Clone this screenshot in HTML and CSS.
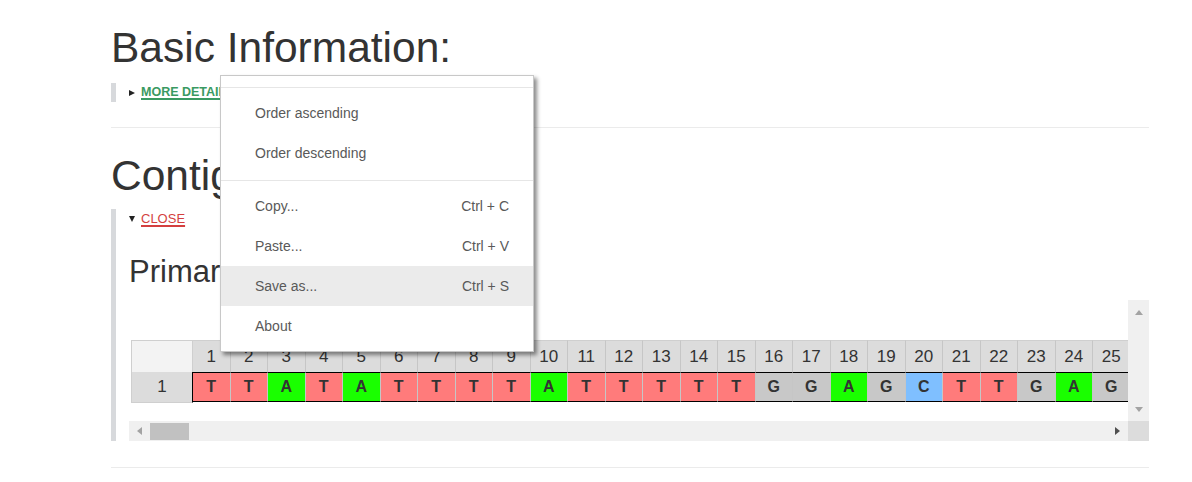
FILE: index.html
```html
<!DOCTYPE html>
<html lang="en">
<head>
<meta charset="utf-8">
<title>Contig viewer</title>
<link rel="stylesheet" href="styles.css">
</head>
<body>
<div class="page">
  <h1 class="title">Basic Information:</h1>
  <div class="panel panel--first">
    <div class="toggle"><span class="caret caret--right"></span><a class="link link--more" href="#">MORE DETAILS</a></div>
  </div>
  <div class="rule"></div>

  <h1 class="title">Contig Information:</h1>
  <div class="panel panel--open">
    <div class="toggle"><span class="caret caret--down"></span><a class="link link--close" href="#">CLOSE</a></div>
    <h2 class="subtitle">Primary Sequence</h2>
    <div class="scroller">
      <div class="viewport">
        <div class="seq-table">
          <div class="seq-row seq-row--head">
            <div class="cell corner"></div>
            <div class="cell num">1</div><div class="cell num">2</div><div class="cell num">3</div><div class="cell num">4</div><div class="cell num">5</div>
            <div class="cell num">6</div><div class="cell num">7</div><div class="cell num">8</div><div class="cell num">9</div><div class="cell num">10</div>
            <div class="cell num">11</div><div class="cell num">12</div><div class="cell num">13</div><div class="cell num">14</div><div class="cell num">15</div>
            <div class="cell num">16</div><div class="cell num">17</div><div class="cell num">18</div><div class="cell num">19</div><div class="cell num">20</div>
            <div class="cell num">21</div><div class="cell num">22</div><div class="cell num">23</div><div class="cell num">24</div><div class="cell num">25</div>
          </div>
          <div class="seq-row seq-row--data">
            <div class="cell rowhead">1</div>
            <div class="cell base base--t">T</div><div class="cell base base--t">T</div><div class="cell base base--a">A</div><div class="cell base base--t">T</div><div class="cell base base--a">A</div>
            <div class="cell base base--t">T</div><div class="cell base base--t">T</div><div class="cell base base--t">T</div><div class="cell base base--t">T</div><div class="cell base base--a">A</div>
            <div class="cell base base--t">T</div><div class="cell base base--t">T</div><div class="cell base base--t">T</div><div class="cell base base--t">T</div><div class="cell base base--t">T</div>
            <div class="cell base base--g">G</div><div class="cell base base--g">G</div><div class="cell base base--a">A</div><div class="cell base base--g">G</div><div class="cell base base--c">C</div>
            <div class="cell base base--t">T</div><div class="cell base base--t">T</div><div class="cell base base--g">G</div><div class="cell base base--a">A</div><div class="cell base base--g">G</div>
          </div>
        </div>
      </div>
      <div class="vscroll">
        <span class="arrow arrow--up"></span>
        <span class="arrow arrow--down"></span>
      </div>
      <div class="hscroll">
        <span class="hbtn"><span class="arrow arrow--left"></span></span>
        <span class="thumb"></span>
        <span class="hspace"></span>
        <span class="hbtn"><span class="arrow arrow--right"></span></span>
      </div>
      <div class="corner-box"></div>
    </div>
  </div>
  <div class="rule rule--bottom"></div>
</div>

<div class="context-menu">
  <div class="menu-sep"></div>
  <div class="menu-item"><span>Order ascending</span></div>
  <div class="menu-item"><span>Order descending</span></div>
  <div class="menu-sep"></div>
  <div class="menu-item"><span>Copy...</span><span>Ctrl + C</span></div>
  <div class="menu-item"><span>Paste...</span><span>Ctrl + V</span></div>
  <div class="menu-item menu-item--active"><span>Save as...</span><span>Ctrl + S</span></div>
  <div class="menu-item"><span>About</span></div>
</div>
</body>
</html>
```

FILE: styles.css
```css
html, body {
  margin: 0;
  padding: 0;
  background: #fff;
}
body {
  font-family: "Liberation Sans", Arial, sans-serif;
  color: #333;
  position: relative;
}
.page {
  width: 1038px;
  margin-left: 111px;
  padding-top: 24px;
  padding-bottom: 14px;
}
.title {
  margin: 0;
  font-size: 42.5px;
  line-height: 48px;
  font-weight: normal;
  color: #333;
}
.panel {
  border-left: 5px solid #d7d9dc;
  padding-left: 13px;
}
.panel--first {
  margin-top: 11px;
}
.panel--open {
  margin-top: 9px;
}
.toggle {
  height: 19px;
  line-height: 19px;
  font-size: 12.5px;
  white-space: nowrap;
}
.caret {
  display: inline-block;
  width: 0;
  height: 0;
  margin-right: 6px;
}
.caret--right {
  border-left: 6px solid #222;
  border-top: 3.5px solid transparent;
  border-bottom: 3.5px solid transparent;
}
.caret--down {
  border-top: 6px solid #222;
  border-left: 3.5px solid transparent;
  border-right: 3.5px solid transparent;
  margin-bottom: 1px;
}
.link {
  text-decoration: underline;
  text-decoration-thickness: 2px;
  text-underline-offset: 2px;
}
.link--more {
  color: #3a9a62;
  font-weight: bold;
}
.link--close {
  color: #d43f3f;
  font-size: 13px;
}
.rule {
  height: 1px;
  background: #ebebeb;
  margin-top: 25px;
  margin-bottom: 24px;
}
.rule--bottom {
  margin-top: 26px;
  margin-bottom: 0;
}
.subtitle {
  margin: 26px 0 0;
  font-size: 31px;
  line-height: 36px;
  font-weight: normal;
  color: #333;
}
.scroller {
  margin-top: 10px;
  display: grid;
  grid-template-columns: 1fr 21px;
  grid-template-rows: 121px 20px;
}
.viewport {
  overflow: hidden;
  padding: 40px 0 0 2px;
}
.seq-table {
  width: 999.5px;
}
.seq-row {
  display: flex;
  align-items: flex-start;
}
.cell {
  box-sizing: border-box;
  flex: 0 0 37.5px;
  width: 37.5px;
  text-align: center;
}
.corner {
  flex-basis: 62px;
  width: 62px;
  height: 32px;
  background: #f3f3f3;
  border: 1px solid #cfcfcf;
  border-bottom: 0;
}
.num {
  height: 32px;
  line-height: 31px;
  background: #dcdcdc;
  border-top: 1px solid #cfcfcf;
  border-right: 1px solid #c6c6c6;
  font-size: 17px;
  color: #333;
}
.rowhead {
  flex-basis: 62px;
  width: 62px;
  height: 31px;
  line-height: 29px;
  background: #dcdcdc;
  border-left: 1px solid #cfcfcf;
  border-bottom: 1px solid #cfcfcf;
  border-right: 1px solid #000;
  font-size: 17px;
  color: #333;
}
.base {
  height: 30px;
  line-height: 28px;
  border-top: 1px solid #000;
  border-bottom: 1px solid #000;
  border-right: 1px solid #c6c6c6;
  font-size: 16px;
  font-weight: bold;
  color: #333;
}
.base--t { background: #ff7b7b; }
.base--a { background: #1aff00; }
.base--g { background: #c8c8c8; }
.base--c { background: #7fbfff; }

.vscroll {
  background: #f0f0f0;
  display: flex;
  flex-direction: column;
  align-items: center;
  justify-content: space-between;
  padding: 10px 0 9px;
  box-sizing: border-box;
}
.hscroll {
  background: #f0f0f0;
  display: flex;
  align-items: stretch;
}
.hbtn {
  flex: 0 0 21px;
  display: flex;
  align-items: center;
  justify-content: center;
}
.thumb {
  flex: 0 0 39px;
  margin: 2px 0 1px;
  background: #c1c1c1;
}
.hspace {
  flex: 1;
}
.corner-box {
  background: #dcdcdc;
}
.arrow {
  display: block;
  width: 0;
  height: 0;
}
.arrow--up {
  border-bottom: 5px solid #a3a3a3;
  border-left: 4.5px solid transparent;
  border-right: 4.5px solid transparent;
}
.arrow--down {
  border-top: 5px solid #a3a3a3;
  border-left: 4.5px solid transparent;
  border-right: 4.5px solid transparent;
}
.arrow--left {
  border-right: 5px solid #a3a3a3;
  border-top: 4.5px solid transparent;
  border-bottom: 4.5px solid transparent;
}
.arrow--right {
  border-left: 5px solid #505050;
  border-top: 4.5px solid transparent;
  border-bottom: 4.5px solid transparent;
}

.context-menu {
  position: absolute;
  left: 220px;
  top: 75px;
  width: 314px;
  box-sizing: border-box;
  background: #fff;
  border: 1px solid #c8c8c8;
  box-shadow: 3px 3px 4px rgba(0, 0, 0, 0.45);
  padding: 4px 0 5px;
  font-size: 14px;
  color: #595959;
}
.menu-sep {
  height: 1px;
  background: #e6e6e6;
  margin: 7px 0 5px;
}
.menu-item {
  height: 40px;
  display: flex;
  align-items: center;
  justify-content: space-between;
  padding: 0 24px 0 34px;
}
.menu-item--active {
  background: #ebebeb;
}
```
